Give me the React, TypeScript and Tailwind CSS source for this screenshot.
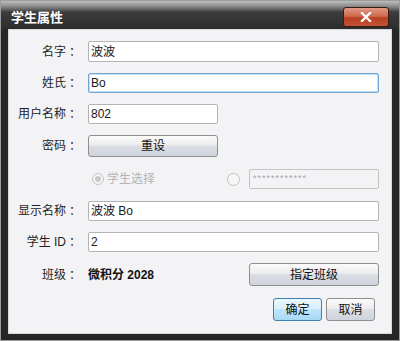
import React from "react";

const font = { fontFamily: '"Liberation Sans", "Noto Sans CJK SC", sans-serif' };

function Label({ children }: { children: React.ReactNode }) {
  return (
    <div className="w-[68px] shrink-0 flex justify-end items-center text-[12px] text-[#1e1e1e] leading-none whitespace-nowrap">
      <span>{children}</span>
      <span className="w-[11px] text-center font-['Noto_Sans_CJK_TC',sans-serif]">：</span>
    </div>
  );
}

function Input({ value, focused, w }: { value: string; focused?: boolean; w?: string }) {
  return (
    <div
      className={
        "ml-[11px] h-full rounded-[2px] border bg-white flex items-center pl-[2px] text-[12px] text-[#1a1a1a] " +
        (focused ? "border-[#6fa7d8] shadow-[inset_0_0_0_1px_#c5def3] " : "border-[#b4b4b4] ") +
        (w ? w : "flex-1")
      }
    >
      {value}
    </div>
  );
}

function Btn({ children, cls, blue }: { children: React.ReactNode; cls: string; blue?: boolean }) {
  return (
    <div
      className={
        "flex items-center justify-center rounded-[3px] border text-[12px] text-[#111] " +
        (blue
          ? "border-[#3c7fb1] bg-[linear-gradient(to_bottom,#eaf6fd_0%,#d9f0fc_45%,#bee6fd_50%,#a7d9f5_100%)] "
          : "border-[#8e8f8f] bg-[linear-gradient(to_bottom,#fbfbfb_0%,#ececec_45%,#dbdee4_50%,#cfd3dc_100%)] ") +
        cls
      }
    >
      {children}
    </div>
  );
}

export default function App() {
  return (
    <div
      className="w-[400px] h-[341px] border border-[#9c9c9c] bg-[#262626] flex flex-col"
      style={font}
    >
      {/* title bar */}
      <div className="h-[28px] shrink-0 relative bg-[linear-gradient(to_bottom,#bdbdbd_0px,#8e8e8e_5px,#5a5a5a_9px,#3c3c3c_11px,#2c2c2c_28px)]">
        <div className="absolute left-[10px] top-[10px] text-[13px] font-bold text-white leading-none">
          学生属性
        </div>
        <div className="absolute left-[342px] top-[6px] w-[46px] h-[20px] rounded-[3px] border border-[#3b1a12] bg-[linear-gradient(to_bottom,#e09a86_0%,#cf6b50_45%,#b8401f_55%,#c4533a_100%)] flex items-center justify-center">
          <svg width="12" height="10" viewBox="0 0 12 10">
            <path d="M2 1 L10 9 M10 1 L2 9" stroke="#ffffff" strokeWidth="2.4" strokeLinecap="square" />
          </svg>
        </div>
      </div>

      {/* content */}
      <div className="flex-1 mx-[7px] mb-[6px] bg-[#f3f3f6] border border-[#d8d8d8] flex flex-col pt-[11px] pr-[12px]">
        <div className="flex items-center h-[21px]">
          <Label>名字</Label>
          <Input value="波波" />
        </div>
        <div className="flex items-center h-[20px] mt-[11px]">
          <Label>姓氏</Label>
          <Input value="Bo" focused />
        </div>
        <div className="flex items-center h-[20px] mt-[11px]">
          <Label>用户名称</Label>
          <Input value="802" w="w-[130px]" />
        </div>
        <div className="flex items-center h-[22px] mt-[11px]">
          <Label>密码</Label>
          <Btn cls="ml-[11px] w-[130px] h-full">重设</Btn>
        </div>
        <div className="flex items-center h-[20px] mt-[12px]">
          <div className="w-[68px] shrink-0" />
          <div className="ml-[15px] w-[12px] h-[12px] rounded-full border border-[#c2c2c2] bg-[#f6f6f6] flex items-center justify-center">
            <div className="w-[6px] h-[6px] rounded-full bg-[#c8c8c8]" />
          </div>
          <div className="ml-[3px] text-[12px] text-[#b4b4b4]">学生选择</div>
          <div className="ml-[72px] w-[13px] h-[13px] rounded-full border border-[#c2c2c2] bg-[#f6f6f6]" />
          <div className="ml-[9px] flex-1 h-full rounded-[2px] border border-[#c4c4c4] flex items-center pl-[3px] text-[9px] text-[#a8a8a8] tracking-[1px]">
            ************
          </div>
        </div>
        <div className="flex items-center h-[20px] mt-[12px]">
          <Label>显示名称</Label>
          <Input value="波波 Bo" />
        </div>
        <div className="flex items-center h-[20px] mt-[11px]">
          <Label>学生 ID</Label>
          <Input value="2" />
        </div>
        <div className="flex items-center h-[23px] mt-[11px]">
          <Label>班级</Label>
          <div className="ml-[11px] text-[12px] font-bold text-[#111]">微积分 2028</div>
          <div className="flex-1" />
          <Btn cls="w-[130px] h-full">指定班级</Btn>
        </div>
        <div className="flex items-center justify-end h-[23px] mt-[12px] pr-[4px] gap-[4px]">
          <Btn cls="w-[49px] h-full" blue>
            确定
          </Btn>
          <Btn cls="w-[49px] h-full">取消</Btn>
        </div>
      </div>
    </div>
  );
}
